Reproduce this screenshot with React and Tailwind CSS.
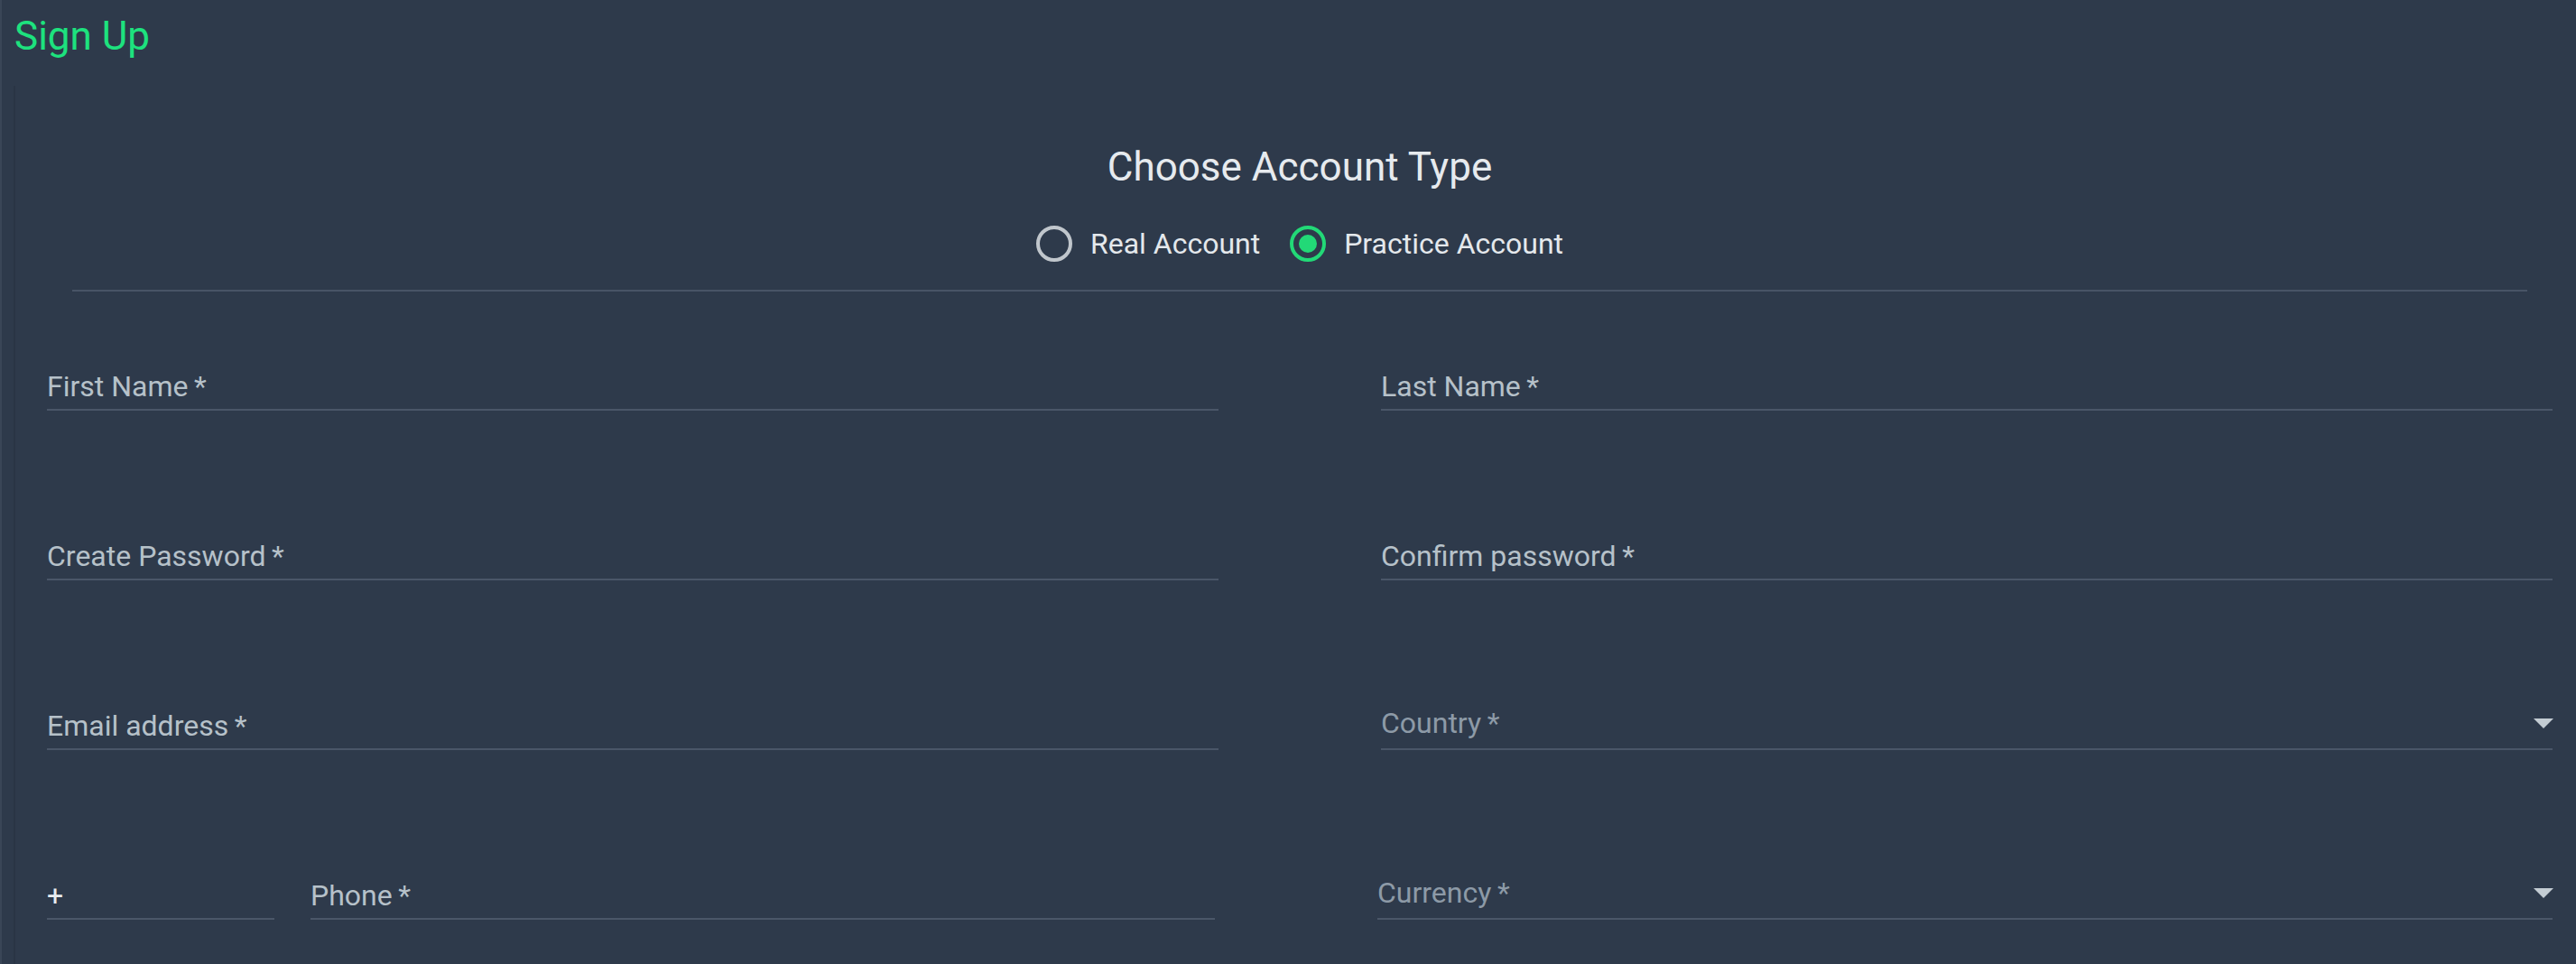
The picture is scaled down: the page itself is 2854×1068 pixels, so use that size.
import React, { useState } from 'react';

// Underlined text field, MUI style
const Field = ({ label, className = '' }) => (
  <div className={`border-b-2 border-[#4a5668] pb-[5px] ${className}`}>
    <span className="block text-[32px] leading-[40px] text-[#b6c1c9]">
      {label}
      {'\u2009*'}
    </span>
  </div>
);

// Select with dropdown arrow on the right
const SelectField = ({ label, className = '' }) => (
  <div className={`flex items-center justify-between border-b-2 border-[#4a5668] pb-[11px] ${className}`}>
    <span className="block text-[32px] leading-[34px] text-[#8d9aa7]">
      {label}
      {'\u2009*'}
    </span>
    <svg width="22" height="11" viewBox="0 0 22 11" className="mr-[-1px]">
      <path d="M0 0h22L11 11z" fill="#c3ccd3" />
    </svg>
  </div>
);

const Radio = ({ checked, label, onClick }) => (
  <button type="button" onClick={onClick} className="flex items-center gap-[20px]">
    <span
      className={`flex h-[40px] w-[40px] items-center justify-center rounded-full border-[4px] ${
        checked ? 'border-[#22d977]' : 'border-[#c0c6cc]'
      }`}
    >
      {checked && <span className="h-[20px] w-[20px] rounded-full bg-[#22d977]" />}
    </span>
    <span className="text-[32px] leading-[40px] text-[#e4e8ec]">{label}</span>
  </button>
);

export default function App() {
  const [type, setType] = useState('practice');

  return (
    <div
      className="relative min-h-[1068px] overflow-hidden border-l-2 border-[#3a4657] bg-[#2e3a4b]"
      style={{ fontFamily: 'Roboto, "Liberation Sans", sans-serif' }}
    >
      <div className="absolute left-[13px] top-[95px] bottom-0 w-[2px] bg-[#2a3545]" />

      <h1 className="pl-[14px] pt-[14px] text-[44px] leading-[52px] text-[#1de27e]">Sign Up</h1>

      {/* account type */}
      <div className="ml-[78px] mr-[54px] mt-[93px] flex flex-col items-center">
        <h2 className="text-[44px] leading-[52px] text-[#e6eaee]">Choose Account Type</h2>
        <div className="mt-[39px] flex items-center gap-[33px]">
          <Radio checked={type === 'real'} label="Real Account" onClick={() => setType('real')} />
          <Radio checked={type === 'practice'} label="Practice Account" onClick={() => setType('practice')} />
        </div>
        <div className="mt-[31px] h-[2px] w-full bg-[#485466]" />
      </div>

      {/* form */}
      <div className="mt-[85px] grid grid-cols-2 items-end gap-x-[180px] gap-y-[141px] pl-[50px] pr-[26px]">
        <Field label="First Name" />
        <Field label="Last Name" />
        <Field label="Create Password" />
        <Field label="Confirm password" />
        <Field label="Email address" />
        <SelectField label="Country" />
        <div className="mr-[4px] flex items-end gap-[40px]">
          <div className="w-[252px] border-b-2 border-[#4a5668] pb-[5px]">
            <span className="block text-[32px] leading-[40px] text-[#e8ecef]">+</span>
          </div>
          <Field label="Phone" className="flex-1" />
        </div>
        <SelectField label="Currency" className="-ml-[4px]" />
      </div>
    </div>
  );
}
